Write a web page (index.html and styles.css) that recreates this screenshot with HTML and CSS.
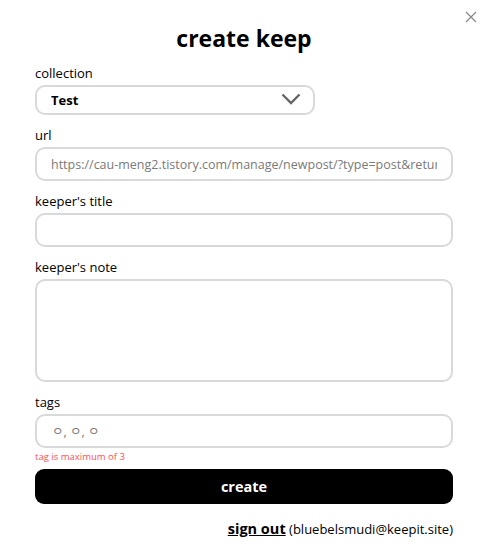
FILE: index.html
```html
<!DOCTYPE html>
<html lang="en">
<head>
    <meta charset="UTF-8">
    <meta name="viewport" content="width=device-width, initial-scale=1.0">
    <title>create keep</title>
    <link rel="stylesheet" href="styles.css">
</head>
<body>
    <div class="popup">
        <button class="close" aria-label="close">
            <svg width="12" height="12" viewBox="0 0 12 12">
                <path d="M1 1 L11 11 M11 1 L1 11" stroke="#8a8a8a" stroke-width="1.3" fill="none"/>
            </svg>
        </button>
        <h1>create keep</h1>
        <form class="keep-form">
            <label for="collection">collection</label>
            <div class="select-wrap">
                <select id="collection">
                    <option>Test</option>
                </select>
                <svg class="chevron" width="20" height="12" viewBox="0 0 20 12">
                    <path d="M1.5 1.5 L10 10 L18.5 1.5" stroke="#666" stroke-width="2.4" fill="none"/>
                </svg>
            </div>

            <label for="url">url</label>
            <input type="text" id="url" placeholder="https://cau-meng2.tistory.com/manage/newpost/?type=post&returnURL=">

            <label for="title">keeper's title</label>
            <input type="text" id="title">

            <label for="note">keeper's note</label>
            <textarea id="note"></textarea>

            <label for="tags">tags</label>
            <input type="text" id="tags" class="tags" placeholder="ㅇ, ㅇ, ㅇ">
            <p class="hint">tag is maximum of 3</p>

            <button type="submit" class="submit">create</button>
        </form>
        <p class="account"><a href="#">sign out</a> (bluebelsmudi@keepit.site)</p>
    </div>
</body>
</html>
```
FILE: styles.css
```css
/* 팝업 기본 */
body {
    margin: 0;
    font-family: "Open Sans", "Noto Sans CJK KR", sans-serif;
    background: #fff;
    color: #000;
}

.popup {
    position: relative;
    width: 491px;
    padding: 23px 38px 0 35px;
    box-sizing: border-box;
}

.close {
    position: absolute;
    top: 11px;
    right: 14px;
    border: none;
    background: none;
    padding: 0;
    cursor: pointer;
}

h1 {
    margin: 0;
    text-align: center;
    font-size: 23px;
    font-weight: 700;
    line-height: 30px;
}

/* 폼 */
.keep-form {
    display: flex;
    flex-direction: column;
}

label {
    font-size: 13px;
    line-height: 18px;
    margin: 11px 0 3px;
}

input, textarea, select {
    font-family: inherit;
    box-sizing: border-box;
    border: 2px solid #d9d9d9;
    border-radius: 10px;
    background: #fff;
    outline: none;
}

input {
    height: 34px;
    padding: 0 14px;
    font-size: 12.5px;
}

input::placeholder {
    color: #7a7a7a;
}

textarea {
    height: 103px;
    resize: none;
}

.select-wrap {
    position: relative;
    width: 280px;
}

select {
    width: 100%;
    height: 30px;
    padding: 0 14px;
    font-size: 13px;
    font-weight: 700;
    color: #000;
    appearance: none;
}

.chevron {
    position: absolute;
    right: 14px;
    top: 8px;
    pointer-events: none;
}

.tags {
    padding-left: 15px;
}

.hint {
    margin: 3px 0 6px;
    font-size: 9.5px;
    line-height: 12px;
    color: #ff5252;
}

.submit {
    height: 35px;
    border: none;
    border-radius: 9px;
    background: #000;
    color: #fff;
    font-family: inherit;
    font-size: 14.5px;
    font-weight: 700;
    cursor: pointer;
}

.account {
    margin: 15px 0 0;
    text-align: right;
    font-size: 13px;
    line-height: 20px;
}

.account a {
    color: #000;
    font-weight: 700;
    font-size: 14.5px;
}
```
